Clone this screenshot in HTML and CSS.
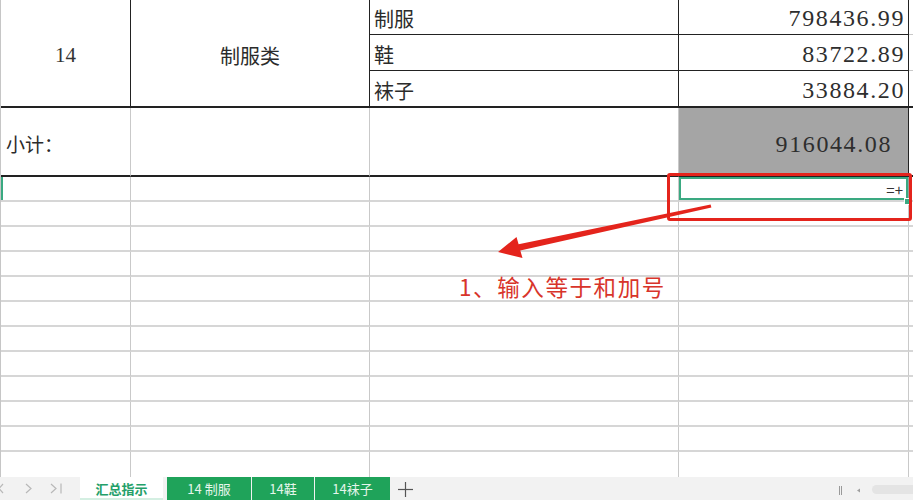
FILE: index.html
```html
<!DOCTYPE html>
<html>
	<head>
		<meta charset="utf-8">
		<title>汇总指示</title>
		<link rel="stylesheet" href="styles.css">
	</head>
	<body>

		<div class="sheet">
			<div class="grid">
				<!-- 14 制服类 -->
				<div class="cell group code">14</div>
				<div class="cell group name">制服类</div>
				<div class="cell item">制服</div>
				<div class="cell num">798436.99</div>
				<div class="cell edge dark"></div>
				<div class="cell item">鞋</div>
				<div class="cell num">83722.89</div>
				<div class="cell edge dark"></div>
				<div class="cell item last">袜子</div>
				<div class="cell num last">33884.20</div>
				<div class="cell edge last"></div>

				<!-- 小计 -->
				<div class="cell total label">小计：</div>
				<div class="cell total"></div>
				<div class="cell total"></div>
				<div class="cell total sum">916044.08</div>
				<div class="cell total edge"></div>

				<!-- empty rows -->
				<div class="cell blank marked"></div><div class="cell blank"></div><div class="cell blank"></div><div class="cell blank selected">=+</div><div class="cell blank edge"></div>
				<div class="cell blank"></div><div class="cell blank"></div><div class="cell blank"></div><div class="cell blank"></div><div class="cell blank edge"></div>
				<div class="cell blank"></div><div class="cell blank"></div><div class="cell blank"></div><div class="cell blank"></div><div class="cell blank edge"></div>
				<div class="cell blank"></div><div class="cell blank"></div><div class="cell blank"></div><div class="cell blank"></div><div class="cell blank edge"></div>
				<div class="cell blank"></div><div class="cell blank"></div><div class="cell blank"></div><div class="cell blank"></div><div class="cell blank edge"></div>
				<div class="cell blank"></div><div class="cell blank"></div><div class="cell blank"></div><div class="cell blank"></div><div class="cell blank edge"></div>
				<div class="cell blank"></div><div class="cell blank"></div><div class="cell blank"></div><div class="cell blank"></div><div class="cell blank edge"></div>
				<div class="cell blank"></div><div class="cell blank"></div><div class="cell blank"></div><div class="cell blank"></div><div class="cell blank edge"></div>
				<div class="cell blank"></div><div class="cell blank"></div><div class="cell blank"></div><div class="cell blank"></div><div class="cell blank edge"></div>
				<div class="cell blank"></div><div class="cell blank"></div><div class="cell blank"></div><div class="cell blank"></div><div class="cell blank edge"></div>
				<div class="cell blank"></div><div class="cell blank"></div><div class="cell blank"></div><div class="cell blank"></div><div class="cell blank edge"></div>
				<div class="cell blank nobottom"></div><div class="cell blank nobottom"></div><div class="cell blank nobottom"></div><div class="cell blank nobottom"></div><div class="cell blank edge nobottom"></div>
			</div>

			<!-- overlays: fill handle and the red annotation -->
			<div class="handle"></div>
			<div class="callout"></div>
			<svg class="arrow" width="913" height="477" viewBox="0 0 913 477">
				<polygon points="498,252 516.5,237 518.6,244.3 710.6,204.6 711.4,207.6 520.3,250.6 522.5,258" fill="#e4241c"/>
			</svg>
			<div class="note">1、输入等于和加号</div>
		</div>

		<div class="tabs">
			<div class="nav">
				<svg width="80" height="23" viewBox="0 0 80 23">
					<polyline points="3,7 -1,11.5 3,16" fill="none" stroke="#b8b8b8" stroke-width="1.2"/>
					<polyline points="26,7 31,11.5 26,16" fill="none" stroke="#b8b8b8" stroke-width="1.2"/>
					<polyline points="51,7 56,11.5 51,16" fill="none" stroke="#b8b8b8" stroke-width="1.2"/>
					<line x1="61" y1="6.5" x2="61" y2="16.5" stroke="#b8b8b8" stroke-width="1.2"/>
				</svg>
			</div>
			<div class="tab active">汇总指示</div>
			<div class="tab green w1">14 制服</div>
			<div class="tab green w2">14鞋</div>
			<div class="tab green w3">14袜子</div>
			<div class="add">
				<svg width="28" height="23" viewBox="0 0 28 23">
					<line x1="7" y1="12.5" x2="22" y2="12.5" stroke="#555" stroke-width="1.2"/>
					<line x1="14.5" y1="5" x2="14.5" y2="20" stroke="#555" stroke-width="1.2"/>
				</svg>
			</div>
			<div class="spacer"></div>
			<div class="scroll">
				<svg width="34" height="23" viewBox="0 0 34 23">
					<line x1="1.5" y1="9" x2="1.5" y2="18" stroke="#9a9a9a" stroke-width="1"/>
					<line x1="3.5" y1="9" x2="3.5" y2="18" stroke="#9a9a9a" stroke-width="1"/>
					<polygon points="19,13.5 22,11.5 22,15.5" fill="#a0a0a0"/>
				</svg>
				<div class="thumb"></div>
			</div>
		</div>

	</body>
</html>
```

FILE: styles.css
```css
html, body {
	margin: 0;
	padding: 0;
}

body {
	width: 913px;
	height: 500px;
	overflow: hidden;
	background: #fff;
	font-family: "Noto Sans CJK SC", "Noto Sans", sans-serif;
	color: #2b2b2b;
}

.sheet {
	position: relative;
	height: 477px;
	overflow: hidden;
}

.grid {
	display: grid;
	grid-template-columns: 130px 239px 309px 230px 5px;
	grid-template-rows: 35px 36px 37px 69px repeat(12, 25px);
	border-left: 1px solid #c6c6c6;
}

.cell {
	box-sizing: border-box;
	display: flex;
	align-items: center;
	border-right: 1px solid #c9c9c9;
	border-bottom: 2px solid #d6d6d6;
	white-space: nowrap;
}

/* 14 制服类 block */
.group {
	grid-row: span 3;
	justify-content: center;
	padding-top: 4px;
	border-right-color: #222;
	border-bottom-color: #222;
}

.code {
	font-family: "Liberation Serif", serif;
	font-size: 21px;
	color: #333;
}

.name {
	font-size: 20px;
}

.item, .num {
	padding-top: 3px;
	border-right-color: #222;
	border-bottom: 1px solid #222;
}

.item {
	padding-left: 4px;
	font-size: 20px;
}

.num, .sum {
	justify-content: flex-end;
	font-family: "Liberation Serif", serif;
	font-size: 24px;
	letter-spacing: 1.6px;
	color: #2e2e2e;
}

.num {
	padding-right: 3px;
}

.item.last, .num.last {
	border-bottom: 2px solid #222;
}

.edge {
	border-right: 0;
}

.edge.dark {
	border-bottom: 1px solid #c9c9c9;
}

.edge.last {
	border-bottom-color: #222;
}

/* 小计 row */
.total {
	border-bottom-color: #222;
}

.label {
	padding-left: 5px;
	padding-top: 4px;
	font-size: 19px;
}

.sum {
	background: #a5a5a5;
	border-right-color: #222;
	padding-right: 16px;
	padding-top: 6px;
}

/* empty rows */
.blank.nobottom {
	border-bottom: 0;
}

.marked {
	box-shadow: inset 2px 0 0 #3aa981;
}

.selected {
	justify-content: flex-end;
	align-items: flex-end;
	padding: 0 5px 3px 0;
	font-size: 15px;
	line-height: 1;
	color: #333;
	box-shadow: inset 0 0 0 2px #3aa981;
	border-right-color: #9a9a9a;
}

.handle {
	position: absolute;
	left: 904px;
	top: 198px;
	width: 5px;
	height: 5px;
	background: #3aa981;
	border: 1px solid #fff;
}

.callout {
	position: absolute;
	left: 667px;
	top: 173px;
	width: 239px;
	height: 42px;
	border: 3px solid #e4241c;
	border-radius: 3px;
}

.arrow {
	position: absolute;
	left: 0;
	top: 0;
}

.note {
	position: absolute;
	left: 459px;
	top: 270px;
	font-size: 22.5px;
	color: #d8342a;
	letter-spacing: 1.6px;
}

/* sheet tabs */
.tabs {
	display: flex;
	height: 23px;
	background: #f2f2f2;
	font-size: 13px;
	line-height: 23px;
}

.nav {
	width: 80px;
}

.nav svg, .scroll svg, .add svg {
	display: block;
}

.tab {
	box-sizing: border-box;
	text-align: center;
}

.tab.active {
	width: 83px;
	background: #fff;
	color: #23a069;
	font-weight: bold;
	border-bottom: 2px solid #d4efe2;
	margin-right: 4px;
}

.tab.green {
	background: #1fa35a;
	color: #e6f6ec;
	margin-right: 1px;
}

.w1 { width: 84px; }
.w2 { width: 62px; }
.w3 { width: 75px; margin-right: 0; }

.add {
	width: 28px;
}

.spacer {
	flex: 1;
}

.scroll {
	display: flex;
	align-items: center;
	width: 75px;
}

.thumb {
	flex: 1;
	height: 9px;
	margin-top: 2px;
	background: #e4e4e4;
	border-radius: 5px 0 0 5px;
}
```
